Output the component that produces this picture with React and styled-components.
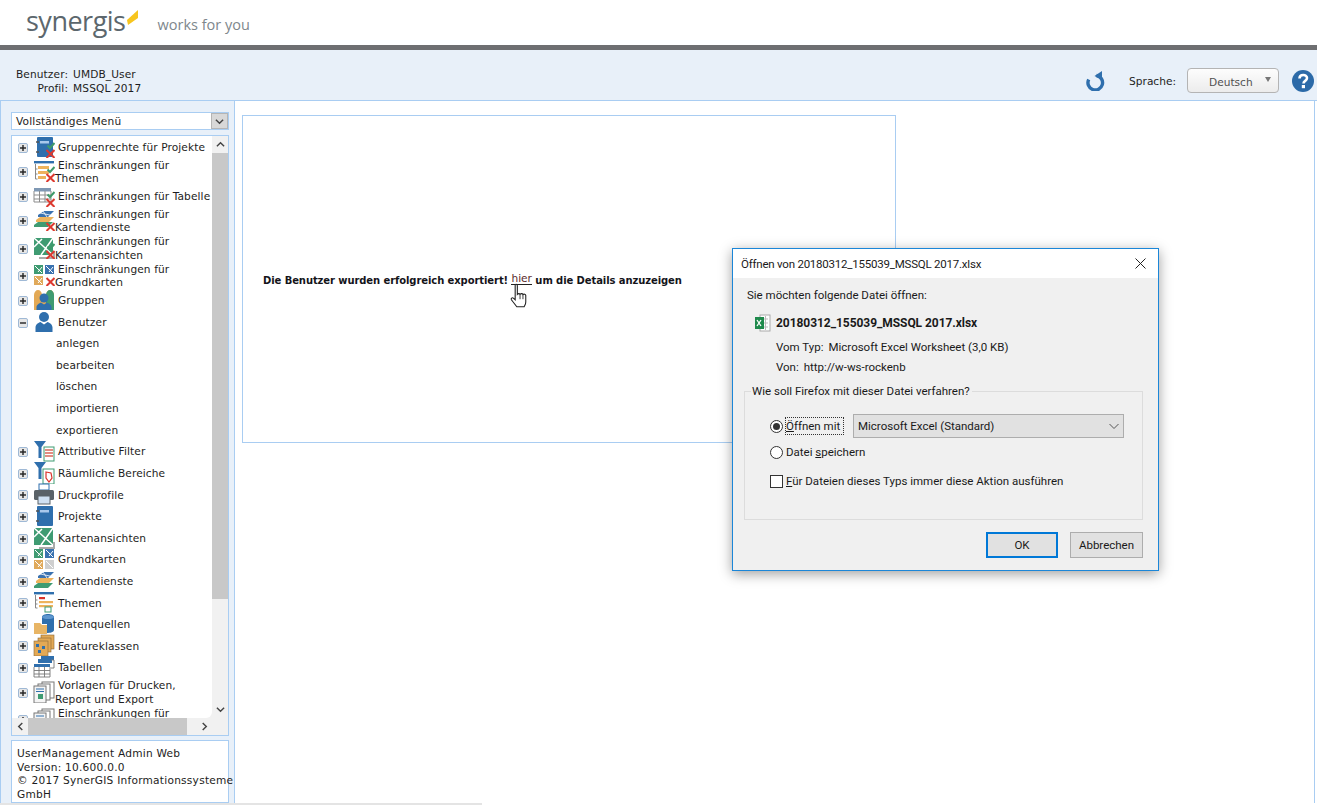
import React from "react";
import styled, { createGlobalStyle } from "styled-components";

const Global = createGlobalStyle`
  html, body { margin: 0; padding: 0; height: 805px; overflow: hidden; background: #fff; }
  body { font-family: "DejaVu Sans", Verdana, sans-serif; font-size: 11px; color: #1d1d22; }
  * { box-sizing: border-box; }
`;

const Page = styled.div`
  position: relative;
  width: 1317px;
  height: 805px;
  display: flex;
  flex-direction: column;
  overflow: hidden;
`;
const Brand = styled.header`
  height: 45px;
  background: #fff;
  display: flex;
  align-items: flex-start;
  padding: 4px 0 0 26px;
  flex: none;
`;
const LogoWord = styled.span`
  font-family: "Open Sans", sans-serif;
  font-size: 27px;
  line-height: 34px;
  color: #5c676d;
  letter-spacing: -0.5px;
`;
const LogoMark = styled.svg`
  width: 12px;
  height: 16px;
  margin: 5px 0 0 1px;
`;
const Tagline = styled.span`
  font-family: "Open Sans", sans-serif;
  font-size: 14.5px;
  line-height: 20px;
  color: #7e878c;
  margin: 11px 0 0 19px;
`;
const GreyBar = styled.div`
  height: 5px;
  flex: none;
  background: #6e6f71;
`;
const InfoBar = styled.div`
  height: 51px;
  flex: none;
  background: #e8f0f9;
  border-bottom: 1px solid #a9cdf2;
  display: flex;
  align-items: flex-start;
  padding: 17px 0 0 16px;
`;
const UserGrid = styled.div`
  display: grid;
  grid-template-columns: auto auto;
  column-gap: 5px;
  line-height: 14px;
  font-size: 10.6px;
  letter-spacing: 0.1px;
`;
const UserLabel = styled.span`
  text-align: right;
`;
const Tools = styled.div`
  margin-left: auto;
  display: flex;
  align-items: center;
  margin-top: 1px;
`;
const Reload = styled.svg`
  width: 20px;
  height: 20px;
  margin-right: 23px;
`;
const LangLabel = styled.span`
  font-size: 10.6px;
  margin-right: 11px;
`;
const LangSelect = styled.div`
  width: 92px;
  height: 25px;
  border: 1px solid #b4b4b4;
  border-radius: 4px;
  background: linear-gradient(#fdfdfd, #ececec);
  display: flex;
  align-items: center;
  padding: 2px 0 0 21px;
  color: #505050;
  font-size: 10.6px;
`;
const LangCaret = styled.span`
  width: 0;
  height: 0;
  margin-left: 12px;
  margin-top: -4px;
  border-left: 3.5px solid transparent;
  border-right: 3.5px solid transparent;
  border-top: 5px solid #777;
`;
const Help = styled.svg`
  width: 22px;
  height: 22px;
  margin: 0 3px 0 13px;
`;
const Body = styled.div`
  flex: 1;
  min-height: 0;
  display: flex;
`;
const Side = styled.aside`
  width: 235px;
  flex: none;
  background: #e8f0f9;
  border-left: 1px solid #a9cdf2;
  border-right: 1px solid #a9cdf2;
  padding: 11px 5px 0 10px;
  display: flex;
  flex-direction: column;
`;
const MenuSelect = styled.div`
  height: 18px;
  flex: none;
  background: #fff;
  border: 1px solid #a9cdf2;
  display: flex;
  align-items: center;
  justify-content: space-between;
  padding-left: 4px;
  font-size: 10.6px;
  letter-spacing: 0.15px;
`;
const MenuArrow = styled.span`
  width: 17px;
  height: 16px;
  background: #d8d8d8;
  border: 1px solid #b5b5b5;
  display: flex;
  align-items: center;
  justify-content: center;
`;
const TreeBox = styled.div`
  margin-top: 5px;
  height: 601px;
  flex: none;
  border: 1px solid #a9cdf2;
  background: #f1f1f1;
  display: grid;
  grid-template-columns: 200px 16px;
  grid-template-rows: 582px 17px;
`;
const TreeView = styled.div`
  background: #fff;
  overflow: hidden;
  padding-top: 1px;
  border-radius: 0 0 6px 0;
`;
const Row = styled.div`
  height: ${(p) => (p.$two ? "27.5px" : "21.6px")};
  display: flex;
  align-items: center;
  white-space: nowrap;
  font-size: 10.6px;
  line-height: 13.6px;
  letter-spacing: 0.1px;
  padding-left: 6px;
`;
const Expander = styled.span`
  width: 10px;
  height: 10px;
  flex: none;
  border: 1px solid #9fb9d6;
  border-radius: 2px;
  background: #e6e6e6;
  position: relative;
  margin-right: 5px;
  &::before {
    content: "";
    position: absolute;
    left: 1px;
    right: 1px;
    top: 3px;
    height: 2px;
    background: #222;
    transform: scaleY(0.7);
  }
  &::after {
    content: ${(p) => (p.$open ? "none" : '""')};
    position: absolute;
    top: 1px;
    bottom: 1px;
    left: 3px;
    width: 2px;
    background: #222;
    transform: scaleX(0.7);
  }
`;
const IconBox = styled.svg`
  width: 22px;
  height: 22px;
  flex: none;
  margin-top: -2px;
`;
const Line = styled.div`
  padding-left: ${(p) => (p.$first ? "3px" : "0")};
`;
const SubRow = styled.div`
  height: 21.6px;
  display: flex;
  align-items: center;
  padding: 0 0 2px 44px;
  font-size: 10.6px;
  letter-spacing: 0.1px;
`;
const VTrack = styled.div`
  display: flex;
  flex-direction: column;
  background: #f1f1f1;
`;
const ScrollBtn = styled.div`
  width: 16px;
  height: 17px;
  flex: none;
  display: flex;
  align-items: center;
  justify-content: center;
`;
const VThumb = styled.div`
  height: 446px;
  flex: none;
  background: #c8c8c8;
`;
const Spacer = styled.div`
  flex: 1;
`;
const HTrack = styled.div`
  display: flex;
  background: #f1f1f1;
`;
const HThumb = styled.div`
  width: 159px;
  flex: none;
  background: #c8c8c8;
`;
const Corner = styled.div`
  background: #f1f1f1;
`;
const VersionBox = styled.div`
  margin-top: 4px;
  flex: 1;
  background: #fff;
  border: 1px solid #a9cdf2;
  padding: 6px 0 0 5px;
  font-size: 10.6px;
  line-height: 13.7px;
  letter-spacing: 0.24px;
  white-space: nowrap;
`;
const Main = styled.main`
  flex: 1;
  background: #fff;
  margin-right: 2px;
  border-right: 1px solid #a9cdf2;
  padding: 14px 0 0 7px;
`;
const Panel = styled.section`
  width: 654px;
  height: 328px;
  border: 1px solid #a9cdf2;
  display: flex;
  align-items: center;
  padding-left: 20px;
  font-weight: 700;
  font-size: 10px;
  color: #14141a;
`;
const Message = styled.div`
  position: relative;
  margin-top: 2px;
  letter-spacing: -0.09px;
  white-space: pre;
`;
const HereLink = styled.span`
  font-weight: 400;
  font-size: 10.6px;
  letter-spacing: 0;
  color: #5a2a2a;
  border-bottom: 1px solid #222;
  position: relative;
  top: -2px;
`;
const HandCursor = styled.svg`
  position: absolute;
  left: 245px;
  top: 9px;
  width: 23px;
  height: 27px;
`;
const BottomBar = styled.div`
  width: 482px;
  height: 2px;
  flex: none;
  background: #e4e4e4;
`;

/* Firefox download dialog */
const Dialog = styled.div`
  position: absolute;
  left: 732px;
  top: 248px;
  width: 427px;
  height: 323px;
  background: #f0f0f0;
  border: 1px solid #1b86d8;
  box-shadow: 0 3px 12px rgba(0, 0, 0, 0.38);
  font-family: Roboto, sans-serif;
  font-size: 11.5px;
  color: #1a1a1a;
  display: flex;
  flex-direction: column;
`;
const TitleBar = styled.div`
  height: 29px;
  flex: none;
  background: #fff;
  display: flex;
  align-items: center;
  justify-content: space-between;
  padding: 0 12px 0 8px;
  letter-spacing: -0.22px;
`;
const DialogBody = styled.div`
  flex: 1;
  display: flex;
  flex-direction: column;
  padding: 9px 15px 0 11px;
`;
const Prompt = styled.div`
  padding-left: 3px;
  line-height: 16px;
`;
const FileLine = styled.div`
  display: flex;
  align-items: center;
  margin: 11px 0 0 10px;
  font-weight: 700;
  font-size: 12px;
  height: 18px;
  letter-spacing: -0.05px;
`;
const Meta = styled.div`
  display: grid;
  margin: 5px 0 0 32px;
  line-height: 20px;
  justify-items: start;
`;
const MetaWide = styled.div`
  display: flex;
  gap: 5px;
`;
const Group = styled.div`
  position: relative;
  margin-top: 14px;
  height: 129px;
  border: 1px solid #dcdcdc;
  padding: 22px 0 0 25px;
`;
const Legend = styled.span`
  position: absolute;
  top: -8px;
  left: 6px;
  padding: 0 2px 0 1px;
  background: #f0f0f0;
  line-height: 15px;
`;
const OptionRow = styled.div`
  display: flex;
  align-items: center;
  height: ${(p) => p.$h || 24}px;
  margin-bottom: ${(p) => p.$after || 0}px;
`;
const Radio = styled.span`
  width: 13px;
  height: 13px;
  flex: none;
  border-radius: 50%;
  border: 1px solid #333;
  background: #fff;
  display: flex;
  align-items: center;
  justify-content: center;
  margin-right: 3px;
  &::after {
    content: ${(p) => (p.$on ? '""' : "none")};
    width: 7px;
    height: 7px;
    border-radius: 50%;
    background: #333;
  }
`;
const Focus = styled.span`
  outline: 1px dotted #333;
  padding: 1px 0;
  width: 57px;
  flex: none;
  white-space: nowrap;
  line-height: 14px;
`;
const Under = styled.u`
  text-underline-offset: 1px;
`;
const Check = styled.span`
  width: 13px;
  height: 13px;
  flex: none;
  border: 1px solid #333;
  background: #fff;
  margin-right: 3px;
`;
const AppSelect = styled.div`
  width: 271px;
  height: 24px;
  margin-left: 10px;
  background: #e1e1e1;
  border: 1px solid #adadad;
  display: flex;
  align-items: center;
  justify-content: space-between;
  padding: 0 3px 0 4px;
`;
const Buttons = styled.div`
  display: flex;
  justify-content: flex-end;
  gap: 12px;
  margin: 12px 0 0;
`;
const Btn = styled.div`
  width: ${(p) => p.$w}px;
  height: 26px;
  background: #e1e1e1;
  border: ${(p) => (p.$primary ? "2px solid #0078d7" : "1px solid #adadad")};
  display: flex;
  align-items: center;
  justify-content: center;
`;
const Excel = styled.svg`
  width: 17px;
  height: 18px;
  margin-right: 5px;
`;

/* small building blocks used in tree icons */
const Cross = () => (
  <path d="M13.500 14l8 8M21.500 14l-8 8" stroke="#dc3a30" strokeWidth="2" fill="none" />
);
const Tick = () => (
  <path d="M14.500 9.500l2.500 2.500 4.500-5" stroke="#3f9a6a" strokeWidth="2" fill="none" />
);
const Perm = () => (
  <>
    <Tick />
    <Cross />
  </>
);
const GridLines = () => (
  <>
    <rect x="1" y="3" width="17" height="3.500" fill="#7f98b4" />
    <path d="M1 6v11h17V6M1 10h17M1 14h17M6.500 6v11M12 6v11" stroke="#8b8b8b" fill="none" strokeWidth="1" />
  </>
);
const MapTile = () => (
  <>
    <rect x="1" y="1" width="19" height="17" fill="#3f9b72" />
    <path d="M1 1l19 17M20 1L8 18M1 10l8-8" stroke="#fff" strokeWidth="1.500" fill="none" />
    <path d="M6 21h15v-6" stroke="#aaa" strokeWidth="2" fill="none" />
  </>
);
const Basemaps = () => (
  <>
    <rect x="1" y="1" width="9" height="9" fill="#3f9b72" />
    <rect x="12" y="1" width="9" height="9" fill="#3a72b0" />
    <rect x="1" y="12" width="9" height="9" fill="#e0a95a" />
    <rect x="12" y="12" width="9" height="9" fill="#cfcfcf" />
    <path d="M2 2l7 7M9 3L5 8M13 2l7 7M20 3l-4 5M2 13l7 7M9 14l-4 5M13 13l7 7" stroke="#fff" strokeWidth="1" fill="none" />
  </>
);
const Layers = () => (
  <>
    <path d="M5 6l6-4h10l-6 6H5z" fill="#3a72b0" />
    <path d="M5 3.500l14 3M10 2l4 6" stroke="#fff" strokeWidth="0.800" fill="none" />
    <path d="M3 11l4-3h14l-5 5H3z" fill="#eeb35c" />
    <path d="M1 16l4-3h15l-5 5H1z" fill="#3f9b72" />
  </>
);
const Themes = () => (
  <>
    <rect x="1" y="1" width="20" height="2.400" fill="#2f6fad" />
    <path d="M2.500 4v13h2M2.500 9h2M2.500 13h2" stroke="#888" fill="none" />
    <rect x="6" y="6" width="6" height="2.200" fill="#d9342b" />
    <rect x="6" y="10" width="14" height="2.200" fill="#eeb35c" />
    <rect x="6" y="14" width="14" height="2.200" fill="#eeb35c" />
  </>
);
const ThemeBars = () => (
  <>
    <rect x="1" y="1" width="20" height="2.400" fill="#2f6fad" />
    <path d="M2.500 4v15h2M2.500 9h2M2.500 14h2" stroke="#888" fill="none" />
    <rect x="5" y="6" width="11" height="3" fill="#eeb35c" />
    <rect x="5" y="11" width="11" height="3" fill="#eeb35c" />
    <rect x="5" y="16" width="8" height="3" fill="#eeb35c" />
  </>
);
const Person = ({ c = "#2f6fad" }) => (
  <>
    <circle cx="11" cy="6" r="5" fill={c} />
    <path d="M2.500 21v-4.500c0-3 3-5 5-5.500l3.500 2.500 3.500-2.500c2 .5 5 2.500 5 5.500V21z" fill={c} />
  </>
);
const ProjectBook = () => (
  <>
    <rect x="4" y="1" width="16" height="20" rx="1" fill="#2f6fad" />
    <rect x="7" y="5" width="9" height="2.500" fill="#a9c8ec" />
    <path d="M3 6h3M3 16h3" stroke="#555" strokeWidth="1.500" />
  </>
);

const icons = {
  groupPerm: (
    <>
      <ProjectBook />
      <Perm />
    </>
  ),
  themePerm: (
    <>
      <ThemeBars />
      <Perm />
    </>
  ),
  tablePerm: (
    <>
      <GridLines />
      <Perm />
    </>
  ),
  layerPerm: (
    <>
      <Layers />
      <Cross />
    </>
  ),
  mapPerm: (
    <>
      <MapTile />
      <Perm />
    </>
  ),
  basePerm: (
    <>
      <Basemaps />
      <rect x="12" y="12" width="10" height="10" fill="#fff" />
      <Cross />
    </>
  ),
  groups: (
    <>
      <path d="M1 21V6c0-3 2-5 4-5s4 2 4 5h4c0-3 2-5 4-5s4 2 4 5v15z" fill="#e3a955" />
      <path d="M13 6c0-3 2-5 4-5s4 2 4 5v15h-8z" fill="#3f9b72" />
      <circle cx="11" cy="9" r="4.500" fill="#2f6fad" />
      <path d="M3.500 21v-3c0-2 3-4 4.500-4.500l3 2 3-2c1.500.5 4.500 2.500 4.500 4.500v3z" fill="#2f6fad" />
    </>
  ),
  user: <Person />,
  attrFilter: (
    <>
      <path d="M1 1h12L8.500 7v11H5.500V7z" fill="#2f6fad" />
      <rect x="11" y="7" width="10" height="14" fill="#fff" stroke="#3f9b72" />
      <path d="M12 10h8M12 13h8M12 16h8" stroke="#d9685a" strokeWidth="1.400" />
    </>
  ),
  spatial: (
    <>
      <path d="M1 0h12L8.500 6v11H5.500V6z" fill="#2f6fad" />
      <rect x="10" y="7" width="11" height="15" fill="#fff" stroke="#3f9b72" />
      <path d="M13 10l5 1 1 5-3 4-3-4z" fill="none" stroke="#d9342b" strokeWidth="1.200" />
    </>
  ),
  print: (
    <>
      <rect x="6" y="1" width="10" height="6" fill="#fff" stroke="#2f6fad" />
      <rect x="1" y="7" width="20" height="10" rx="1.500" fill="#5a6268" />
      <rect x="5" y="13" width="12" height="8" fill="#cfe0f2" stroke="#5a6268" />
    </>
  ),
  project: <ProjectBook />,
  map: <MapTile />,
  base: <Basemaps />,
  layers: <Layers />,
  themes: (
    <>
      <Themes />
      <rect x="12" y="16" width="6" height="5" fill="#fff" stroke="#3f9b72" />
    </>
  ),
  data: (
    <>
      <path d="M1 10h6l2 2h5v9H1z" fill="#e8b565" />
      <path d="M9 4c0-4 12-4 12 0v13c0 3-7 3-7 3v-9H9z" fill="#2f6fad" />
      <ellipse cx="15" cy="4" rx="6" ry="2" fill="#5e97cf" />
    </>
  ),
  feature: (
    <>
      <rect x="8" y="1" width="13" height="14" fill="#e3a955" stroke="#8a6a3a" strokeWidth="0.600" />
      <rect x="5" y="4" width="13" height="14" fill="#e3a955" stroke="#8a6a3a" strokeWidth="0.600" />
      <rect x="1" y="7" width="14" height="15" fill="#e3a955" stroke="#8a6a3a" strokeWidth="0.600" />
      <rect x="3" y="10" width="3" height="3" fill="#2f6fad" />
      <rect x="9" y="12" width="3" height="3" fill="#2f6fad" />
      <rect x="5" y="16" width="3" height="3" fill="#2f6fad" />
    </>
  ),
  tables: (
    <>
      <rect x="8" y="0" width="13" height="4" fill="#2f6fad" />
      <rect x="5" y="3" width="14" height="4" fill="#2f6fad" />
      <rect x="1" y="8" width="16" height="3" fill="#2f6fad" />
      <path d="M18 4h3v8h-3M1 11v10h16V11M1 14.500h16M1 18h16M6 11v10M11.500 11v10" stroke="#777" fill="none" strokeWidth="0.900" />
    </>
  ),
  templates: (
    <>
      <rect x="9" y="1" width="12" height="16" fill="#fff" stroke="#777" />
      <rect x="5" y="3" width="12" height="16" fill="#fff" stroke="#777" />
      <rect x="1" y="5" width="12" height="17" fill="#f4f4f4" stroke="#777" />
      <path d="M3 8h8M3 10.500h8" stroke="#2f6fad" />
      <rect x="5" y="13" width="5" height="5" fill="#3f9b72" />
    </>
  ),
};

const rows = [
  { i: "groupPerm", t: ["Gruppenrechte für Projekte"] },
  { i: "themePerm", t: ["Einschränkungen für", "Themen"] },
  { i: "tablePerm", t: ["Einschränkungen für Tabelle"] },
  { i: "layerPerm", t: ["Einschränkungen für", "Kartendienste"] },
  { i: "mapPerm", t: ["Einschränkungen für", "Kartenansichten"] },
  { i: "basePerm", t: ["Einschränkungen für", "Grundkarten"] },
  { i: "groups", t: ["Gruppen"] },
  { i: "user", t: ["Benutzer"], open: true, sub: ["anlegen", "bearbeiten", "löschen", "importieren", "exportieren"] },
  { i: "attrFilter", t: ["Attributive Filter"] },
  { i: "spatial", t: ["Räumliche Bereiche"] },
  { i: "print", t: ["Druckprofile"] },
  { i: "project", t: ["Projekte"] },
  { i: "map", t: ["Kartenansichten"] },
  { i: "base", t: ["Grundkarten"] },
  { i: "layers", t: ["Kartendienste"] },
  { i: "themes", t: ["Themen"] },
  { i: "data", t: ["Datenquellen"] },
  { i: "feature", t: ["Featureklassen"] },
  { i: "tables", t: ["Tabellen"] },
  { i: "templates", t: ["Vorlagen für Drucken,", "Report und Export"] },
  { i: "templates", t: ["Einschränkungen für", "\u00a0"] },
];

const Chevron = ({ d }) => (
  <svg width="9" height="9" viewBox="0 0 10 10">
    <path d={d} stroke="#444" strokeWidth="1.600" fill="none" />
  </svg>
);

export default function App() {
  return (
    <Page>
      <Global />
      <Brand>
        <LogoWord>synergis</LogoWord>
        <LogoMark viewBox="0 0 12 16">
          <path d="M0 11L11 1v8L1 16z" fill="#f7c51e" />
        </LogoMark>
        <Tagline>works for you</Tagline>
      </Brand>
      <GreyBar />
      <InfoBar>
        <UserGrid>
          <UserLabel>Benutzer:</UserLabel>
          <span>UMDB_User</span>
          <UserLabel>Profil:</UserLabel>
          <span>MSSQL 2017</span>
        </UserGrid>
        <Tools>
          <Reload viewBox="0 0 20 20">
            <path d="M2.700 8.500A7.300 7.300 0 1 0 10.500 4.500" fill="none" stroke="#2f6fad" strokeWidth="3.400" />
            <path d="M16 0v9L8.500 5z" fill="#2f6fad" />
          </Reload>
          <LangLabel>Sprache:</LangLabel>
          <LangSelect>
            Deutsch
            <LangCaret />
          </LangSelect>
          <Help viewBox="0 0 22 22">
            <circle cx="11" cy="11" r="11" fill="#2c6aa8" />
            <path d="M7.500 8.500c0-4.500 7.500-4.500 7.500-.5 0 3-3.500 2.700-3.500 5.500" stroke="#fff" strokeWidth="2.600" fill="none" />
            <rect x="9.800" y="15" width="3.200" height="3.200" fill="#fff" />
          </Help>
        </Tools>
      </InfoBar>
      <Body>
        <Side>
          <MenuSelect>
            Vollständiges Menü
            <MenuArrow>
              <Chevron d="M1 3l4 4 4-4" />
            </MenuArrow>
          </MenuSelect>
          <TreeBox>
            <TreeView>
              {rows.map((r, idx) => (
                <React.Fragment key={idx}>
                  <Row $two={r.t.length > 1}>
                    <Expander $open={r.open} />
                    <IconBox viewBox="0 0 22 22">{icons[r.i]}</IconBox>
                    <div>
                      {r.t.map((line, n) => (
                        <Line key={n} $first={n === 0}>
                          {line}
                        </Line>
                      ))}
                    </div>
                  </Row>
                  {r.sub && r.sub.map((s) => <SubRow key={s}>{s}</SubRow>)}
                </React.Fragment>
              ))}
            </TreeView>
            <VTrack>
              <ScrollBtn>
                <Chevron d="M1 7l4-4 4 4" />
              </ScrollBtn>
              <VThumb />
              <Spacer />
              <ScrollBtn>
                <Chevron d="M1 3l4 4 4-4" />
              </ScrollBtn>
            </VTrack>
            <HTrack>
              <ScrollBtn>
                <Chevron d="M7 1L3 5l4 4" />
              </ScrollBtn>
              <HThumb />
              <Spacer />
              <ScrollBtn>
                <Chevron d="M3 1l4 4-4 4" />
              </ScrollBtn>
            </HTrack>
            <Corner />
          </TreeBox>
          <VersionBox>
            UserManagement Admin Web
            <br />
            Version: 10.600.0.0
            <br />© 2017 SynerGIS Informationssysteme
            <br />
            GmbH
          </VersionBox>
        </Side>
        <Main>
          <Panel>
            <Message>
              Die Benutzer wurden erfolgreich exportiert! <HereLink>hier</HereLink> um die Details anzuzeigen
              <HandCursor viewBox="0 0 20 25">
                <path
                  d="M6 1.500c1-.8 2 0 2 1v8c1-1 2-.8 2.500 0 1-1 2.200-.8 2.700.2 1-.8 2.300-.4 2.600.8v6c0 2-.8 3-1.500 4.500H7.500L2.500 15.500c-.7-1.200.7-2.300 1.800-1.500L6 15.500z"
                  fill="#fff"
                  stroke="#222"
                  strokeWidth="1"
                />
                <path d="M10.500 11v4M13.200 11v4" stroke="#222" strokeWidth="0.800" />
              </HandCursor>
            </Message>
          </Panel>
        </Main>
      </Body>
      <BottomBar />
      <Dialog>
        <TitleBar>
          Öffnen von 20180312_155039_MSSQL 2017.xlsx
          <svg width="11" height="11" viewBox="0 0 11 11">
            <path d="M.5.500l10 10M10.500.500l-10 10" stroke="#222" strokeWidth="1" />
          </svg>
        </TitleBar>
        <DialogBody>
          <Prompt>Sie möchten folgende Datei öffnen:</Prompt>
          <FileLine>
            <Excel viewBox="0 0 17 18">
              <rect x="6" y="1" width="10" height="16" fill="#fff" stroke="#aaa" />
              <path d="M9 5h5M9 9h5M9 13h5M11.500 2v14" stroke="#bbb" />
              <rect x="1" y="3" width="9" height="12" fill="#1f8a4c" />
              <path d="M3 6l4 6M7 6l-4 6" stroke="#fff" strokeWidth="1.300" />
            </Excel>
            20180312_155039_MSSQL 2017.xlsx
          </FileLine>
          <Meta>
            <MetaWide>
              <span>Vom Typ:</span>
              <span>Microsoft Excel Worksheet (3,0 KB)</span>
            </MetaWide>
            <MetaWide>
              <span>Von:</span>
              <span>http://w-ws-rockenb</span>
            </MetaWide>
          </Meta>
          <Group>
            <Legend>Wie soll Firefox mit dieser Datei verfahren?</Legend>
            <OptionRow $h={24} $after={2}>
              <Radio $on />
              <Focus>
                <Under>Ö</Under>ffnen mit
              </Focus>
              <AppSelect>
                Microsoft Excel (Standard)
                <svg width="12" height="12" viewBox="0 0 12 12">
                  <path d="M1.500 4l4.500 4.500L10.500 4" stroke="#555" fill="none" />
                </svg>
              </AppSelect>
            </OptionRow>
            <OptionRow $h={24} $after={5}>
              <Radio />
              <span>
                Datei <Under>s</Under>peichern
              </span>
            </OptionRow>
            <OptionRow $h={24}>
              <Check />
              <span>
                <Under>F</Under>ür Dateien dieses Typs immer diese Aktion ausführen
              </span>
            </OptionRow>
          </Group>
          <Buttons>
            <Btn $primary $w={72}>
              OK
            </Btn>
            <Btn $w={73}>Abbrechen</Btn>
          </Buttons>
        </DialogBody>
      </Dialog>
    </Page>
  );
}
